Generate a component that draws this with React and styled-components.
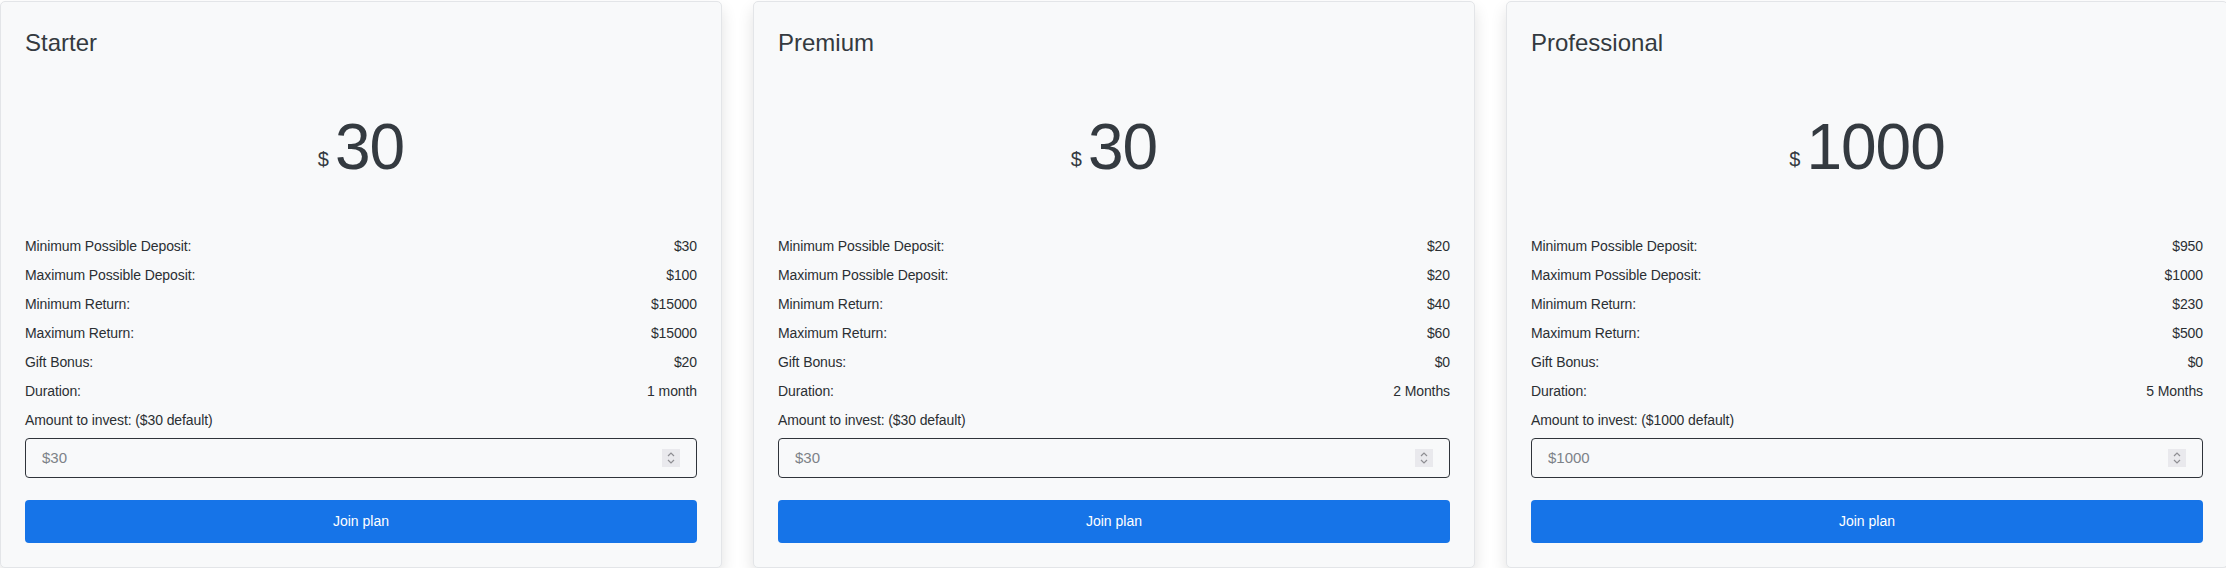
import React from 'react';
import styled, {createGlobalStyle} from "styled-components";

const GlobalStyle = createGlobalStyle`
  html, body {
    margin: 0;
    padding: 0;
    background: #ffffff;
    overflow: hidden;
  }
  body {
    font-family: "Liberation Sans", Arial, sans-serif;
  }
  * {
    box-sizing: border-box;
  }
`;

const Page = styled.div`
  display: flex;
  gap: 31px;
  padding-top: 1px;
  width: 2226px;
  height: 568px;
  overflow: hidden;
`;

const Card = styled.div`
  flex: 0 0 722px;
  width: 722px;
  display: flex;
  flex-direction: column;
  padding: 24px;
  background: #f8f9fa;
  border: 1px solid #e3e5e8;
  border-radius: 5px;
  box-shadow: 0 0.5rem 1rem rgba(0, 0, 0, 0.12);
`;

const Title = styled.h3`
  margin: 0;
  font-size: 24px;
  font-weight: 400;
  line-height: 34px;
  color: #343a40;
`;

const Price = styled.div`
  display: flex;
  justify-content: center;
  align-items: baseline;
  margin: 49px 0 50px;
  font-size: 64px;
  line-height: 1.2;
  letter-spacing: -1px;
  color: #343a40;
`;

const Currency = styled.span`
  font-size: 20px;
  margin-right: 6px;
  position: relative;
  top: -3px;
  letter-spacing: 0;
`;

const Rows = styled.div`
  display: flex;
  flex-direction: column;
  gap: 8px;
`;

const Row = styled.div`
  display: flex;
  justify-content: space-between;
  font-size: 14px;
  line-height: 21px;
  letter-spacing: -0.1px;
  color: #2b2f33;
`;

const Label = styled.label`
  display: block;
  font-size: 14px;
  line-height: 21px;
  letter-spacing: -0.1px;
  color: #2b2f33;
`;

const InputBox = styled.div`
  display: flex;
  align-items: center;
  height: 41px;
  margin-top: 7px;
  padding: 0 16px 0 16px;
  border: 1px solid #2f343a;
  border-radius: 4px;
  background: #f8f9fa;
`;

const Input = styled.input`
  flex: 1;
  min-width: 0;
  border: none;
  outline: none;
  background: transparent;
  padding: 0;
  font-family: "Liberation Sans", Arial, sans-serif;
  font-size: 15px;
  color: #212529;

  &::placeholder {
    color: #7d8288;
  }
`;

const Spinner = styled.div`
  display: flex;
  align-items: center;
  justify-content: center;
  width: 18px;
  height: 18px;
  background: #e9e9ed;
`;

const JoinButton = styled.button`
  height: 44px;
  margin-top: 22px;
  border: none;
  border-radius: 4px;
  background: #1674e8;
  color: #ffffff;
  font-family: "Liberation Sans", Arial, sans-serif;
  font-size: 14px;
  cursor: pointer;
`;

const plans = [
  {
    name: 'Starter',
    price: '30',
    rows: [
      ['Minimum Possible Deposit:', '$30'],
      ['Maximum Possible Deposit:', '$100'],
      ['Minimum Return:', '$15000'],
      ['Maximum Return:', '$15000'],
      ['Gift Bonus:', '$20'],
      ['Duration:', '1 month'],
    ],
    amount: '$30',
  },
  {
    name: 'Premium',
    price: '30',
    rows: [
      ['Minimum Possible Deposit:', '$20'],
      ['Maximum Possible Deposit:', '$20'],
      ['Minimum Return:', '$40'],
      ['Maximum Return:', '$60'],
      ['Gift Bonus:', '$0'],
      ['Duration:', '2 Months'],
    ],
    amount: '$30',
  },
  {
    name: 'Professional',
    price: '1000',
    rows: [
      ['Minimum Possible Deposit:', '$950'],
      ['Maximum Possible Deposit:', '$1000'],
      ['Minimum Return:', '$230'],
      ['Maximum Return:', '$500'],
      ['Gift Bonus:', '$0'],
      ['Duration:', '5 Months'],
    ],
    amount: '$1000',
  },
];

const SpinIcon = () => (
  <svg width="10" height="14" viewBox="0 0 10 14" fill="none" stroke="#8e8e93" strokeWidth="1.2">
    <path d="M2 5 L5 2 L8 5"/>
    <path d="M2 9 L5 12 L8 9"/>
  </svg>
);

const PlanCard = ({plan}) => {
  const {name, price, rows, amount} = plan;

  return (
    <Card>
      <Title>{name}</Title>
      <Price>
        <Currency>$</Currency>
        {price}
      </Price>
      <Rows>
        {rows.map(([label, value]) => (
          <Row key={label}>
            <span>{label}</span>
            <span>{value}</span>
          </Row>
        ))}
        <Label>Amount to invest: ({amount} default)</Label>
      </Rows>
      <InputBox>
        <Input type="text" placeholder={amount}/>
        <Spinner><SpinIcon/></Spinner>
      </InputBox>
      <JoinButton>Join plan</JoinButton>
    </Card>
  );
};

const App = () => {
  return (
    <>
      <GlobalStyle/>
      <Page>
        {plans.map((plan) => (
          <PlanCard key={plan.name} plan={plan}/>
        ))}
      </Page>
    </>
  );
};

export default App;
